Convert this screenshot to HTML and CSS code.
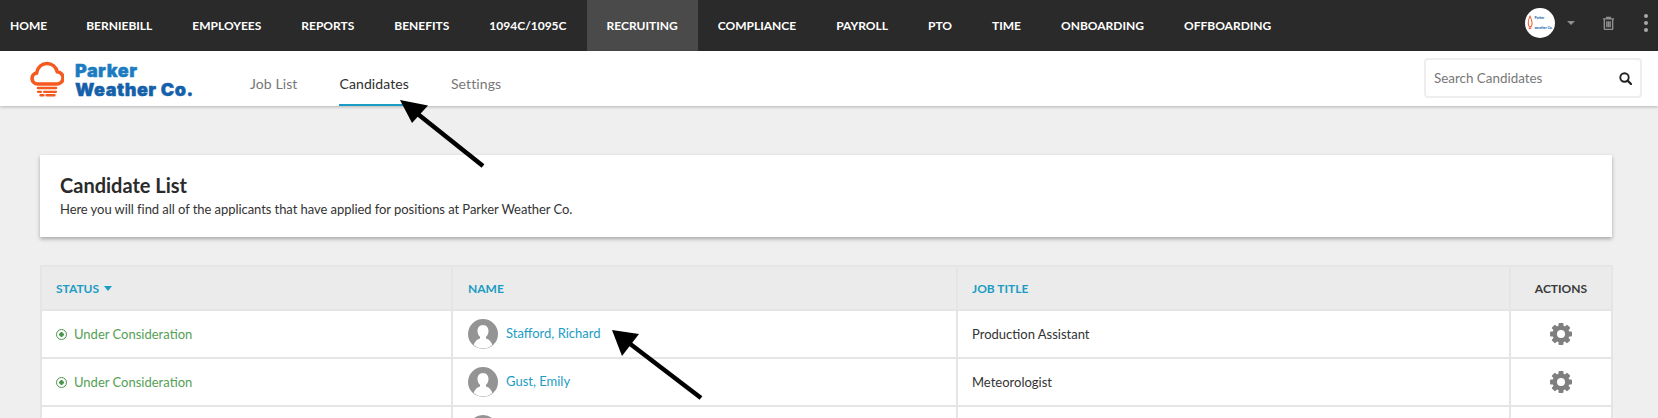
FILE: index.html
```html
<!DOCTYPE html>
<html lang="en">
<head>
<meta charset="utf-8">
<title>Candidate List</title>
<link rel="stylesheet" href="styles.css">
</head>
<body>
<div class="page">
  <nav class="topbar">
    <ul class="topnav">
      <li class="topnav-item first">HOME</li>
      <li class="topnav-item">BERNIEBILL</li>
      <li class="topnav-item">EMPLOYEES</li>
      <li class="topnav-item">REPORTS</li>
      <li class="topnav-item">BENEFITS</li>
      <li class="topnav-item">1094C/1095C</li>
      <li class="topnav-item active">RECRUITING</li>
      <li class="topnav-item">COMPLIANCE</li>
      <li class="topnav-item">PAYROLL</li>
      <li class="topnav-item">PTO</li>
      <li class="topnav-item">TIME</li>
      <li class="topnav-item">ONBOARDING</li>
      <li class="topnav-item">OFFBOARDING</li>
    </ul>
    <div class="topbar-right">
      <div class="company-badge">
        <svg class="badge-flame" width="6" height="18" viewBox="0 0 7 18"><path d="M3.500 1C1.500 5 1 9 2 12c.5 1.500 3 1.500 3.500 0C6.500 9 5.500 5 3.500 1z" fill="none" stroke="#f0562a" stroke-width="1.200"/><path d="M2 15h3" stroke="#f0562a" stroke-width="1.800"/></svg>
        <div class="badge-text"><span>Parker</span><span>weather Co.</span></div>
      </div>
      <span class="caret-down"></span>
      <svg class="trash" width="13" height="14" viewBox="0 0 14 15"><path d="M1 3h12M5 3V1.500h4V3M2.500 3v10.500a1 1 0 0 0 1 1h7a1 1 0 0 0 1-1V3M5.200 5.500v6.500M7 5.500v6.500M8.800 5.500v6.500" fill="none" stroke="#8f8f8f" stroke-width="1.500"/></svg>
      <div class="kebab"><i></i><i></i><i></i></div>
    </div>
  </nav>

  <header class="subbar">
    <div class="logo">
      <svg width="34" height="36" viewBox="0 0 34 36">
        <path d="M9 23H7.500a5.500 5.500 0 0 1-1-10.900C7.500 6 12 2.500 17 2.500c5 0 9 3.500 10.300 8.300a6 6 0 0 1-.8 12.200H9z" fill="none" stroke="#f4591f" stroke-width="3.600"/>
        <path d="M8 27h18" stroke="#f4591f" stroke-width="2.600" stroke-linecap="round"/>
        <path d="M8 30.800h3M14 30.800h12" stroke="#f4591f" stroke-width="2.200" stroke-linecap="round"/>
        <path d="M10.500 34.300h3M16.500 34.300h8" stroke="#f4591f" stroke-width="2.400" stroke-linecap="round"/>
      </svg>
      <div class="logo-text"><span class="logo-top">Parker</span><span class="logo-bottom">Weather Co.</span></div>
    </div>
    <ul class="tabs">
      <li class="tab">Job List</li>
      <li class="tab current">Candidates</li>
      <li class="tab">Settings</li>
    </ul>
    <div class="search">
      <span class="search-label">Search Candidates</span>
      <svg width="13" height="13" viewBox="0 0 13 13"><circle cx="5.500" cy="5.500" r="4.200" fill="none" stroke="#222" stroke-width="1.900"/><path d="M8.600 8.600l3.400 3.400" stroke="#222" stroke-width="2.200" stroke-linecap="round"/></svg>
    </div>
  </header>

  <main class="content">
    <section class="intro-card">
      <h1 class="intro-title">Candidate List</h1>
      <p class="intro-text">Here you will find all of the applicants that have applied for positions at Parker Weather Co.</p>
    </section>

    <table class="grid">
      <colgroup><col class="c-status"><col class="c-name"><col class="c-job"><col class="c-actions"></colgroup>
      <thead>
        <tr>
          <th class="first-col">STATUS <span class="sort-caret"></span></th>
          <th class="name-col">NAME</th>
          <th class="job-col">JOB TITLE</th>
          <th class="actions-head">ACTIONS</th>
        </tr>
      </thead>
      <tbody>
        <tr>
          <td class="status first-col"><span class="dot-circle"></span>Under Consideration</td>
          <td class="name-col"><div class="person"><svg class="avatar" viewBox="0 0 30 30"><use href="#avatar"/></svg><a class="name name-up">Stafford, Richard</a></div></td>
          <td class="job-col">Production Assistant</td>
          <td class="action"><svg class="gear" viewBox="0 0 24 24"><use href="#gear"/></svg></td>
        </tr>
        <tr>
          <td class="status first-col"><span class="dot-circle"></span>Under Consideration</td>
          <td class="name-col"><div class="person"><svg class="avatar" viewBox="0 0 30 30"><use href="#avatar"/></svg><a class="name name-up">Gust, Emily</a></div></td>
          <td class="job-col">Meteorologist</td>
          <td class="action"><svg class="gear" viewBox="0 0 24 24"><use href="#gear"/></svg></td>
        </tr>
        <tr>
          <td></td>
          <td class="name-col"><div class="person"><svg class="avatar" viewBox="0 0 30 30"><use href="#avatar"/></svg></div></td>
          <td></td>
          <td></td>
        </tr>
      </tbody>
    </table>
  </main>

  <svg class="arrows" width="1658" height="418" viewBox="0 0 1658 418">
    <path d="M483 166L414 111" stroke="#000" stroke-width="4.500"/>
    <path d="M400 100L428 105.500L412 123z" fill="#000"/>
    <path d="M701 398L629 343" stroke="#000" stroke-width="4.500"/>
    <path d="M612 330L639 334L622 356z" fill="#000"/>
  </svg>

  <svg class="defs" width="0" height="0">
    <defs>
      <g id="avatar">
        <circle cx="15" cy="15" r="15" fill="#949494"/>
        <clipPath id="avatar-clip"><circle cx="15" cy="15" r="14.500"/></clipPath>
        <g clip-path="url(#avatar-clip)">
          <path d="M15 6c-3.500 0-5.500 2.800-5.500 6 0 2.500 1 4.500 2.500 5.700v1.800C8 21 5.500 23.500 5 30h20c-.5-6.500-3-9-7-10.500v-1.800c1.500-1.200 2.500-3.200 2.500-5.700 0-3.200-2-6-5.500-6z" fill="#fff"/>
        </g>
      </g>
      <g id="gear" fill="#7f7f7f">
        <circle cx="12" cy="12" r="8.500"/>
        <rect x="9.500" y="1" width="5" height="22" rx="1"/>
        <rect x="9.500" y="1" width="5" height="22" rx="1" transform="rotate(45 12 12)"/>
        <rect x="9.500" y="1" width="5" height="22" rx="1" transform="rotate(90 12 12)"/>
        <rect x="9.500" y="1" width="5" height="22" rx="1" transform="rotate(135 12 12)"/>
        <circle cx="12" cy="12" r="4" fill="#fff"/>
      </g>
    </defs>
  </svg>
</div>
</body>
</html>
```

FILE: styles.css
```css
* { box-sizing: border-box; }
html, body { margin: 0; padding: 0; }
body { font-family: Lato, "Liberation Sans", sans-serif; background: #efefef; color: #2b2b2b; }
ul { list-style: none; margin: 0; padding: 0; }
.page { position: relative; width: 1658px; height: 418px; overflow: hidden; background: #efefef; }

.topbar { display: flex; justify-content: space-between; height: 51px; background: #2a2a2a; }
.topnav { display: flex; }
.topnav-item { display: flex; align-items: center; padding: 0 20px; color: #fff; font-size: 12px; font-weight: 700; }
.topnav-item.first { padding: 0 19px 0 10px; }
.topnav-item.active { background: #4a4a4a; }
.topbar-right { display: flex; align-items: center; padding-bottom: 5px; }
.company-badge { display: flex; align-items: center; justify-content: center; gap: 1px; width: 30px; height: 30px; border-radius: 50%; background: #fff; }
.badge-text { display: flex; flex-direction: column; color: #1a67b0; font-size: 3.400px; font-weight: 900; line-height: 10px; white-space: nowrap; }
.caret-down { width: 0; height: 0; margin-left: 12px; border-left: 4px solid transparent; border-right: 4px solid transparent; border-top: 4px solid #8f8f8f; }
.trash { margin-left: 27px; }
.kebab { display: flex; flex-direction: column; gap: 3px; margin: 0 10px 0 29px; }
.kebab i { display: block; width: 4px; height: 4px; border-radius: 50%; background: #a8a8a8; }

.subbar { display: flex; align-items: stretch; height: 55px; background: #fff; box-shadow: 0 1px 3px rgba(0,0,0,.25); position: relative; }
.logo { display: flex; align-items: center; gap: 11px; width: 250px; padding-left: 30px; }
.logo-text { display: flex; flex-direction: column; padding-top: 3px; font-family: Inter, Lato, sans-serif; font-weight: 900; font-size: 18px; line-height: 19px; letter-spacing: .5px; white-space: nowrap; -webkit-text-stroke: .4px currentColor; }
.logo-top { color: #1b7cc2; }
.logo-bottom { color: #1561a9; }
.tabs { display: flex; gap: 42px; }
.tab { display: flex; align-items: center; height: 55px; padding-top: 9px; color: #777; font-size: 14px; letter-spacing: .1px; }
.tab.current { color: #2e2e2e; box-shadow: inset 0 -2px 0 #1b9cc4; }
.search { display: flex; align-items: center; justify-content: space-between; width: 218px; height: 40px; margin: 7px 16px 0 auto; padding: 0 8px; border: 2px solid #eeeeee; border-radius: 4px; background: #fff; }
.search-label { color: #777; font-size: 13.400px; }

.content { padding: 49px 46px 0 40px; }
.intro-card { height: 82px; padding: 18px 20px 0; background: #fff; box-shadow: 0 2px 4px rgba(0,0,0,.3); }
.intro-title { margin: 0; font-size: 20px; line-height: 24px; font-weight: 700; color: #2b2b2b; }
.intro-text { margin: 3px 0 0; font-size: 13px; line-height: 18px; letter-spacing: -.06px; color: #333; }

.grid { width: 1571px; margin-top: 28px; border-collapse: collapse; table-layout: fixed; }
.c-status { width: 411px; }
.c-name { width: 505px; }
.c-job { width: 553px; }
.c-actions { width: 102px; }
.grid th, .grid td { border: 2px solid #e5e5e5; padding: 0 15px; }
.grid th { height: 44px; background: #ebebeb; color: #1b9cc4; font-size: 12px; font-weight: 700; text-align: left; }
.grid td { height: 48px; background: #fff; font-size: 13px; color: #333; }
.grid th.first-col, .grid td.first-col { padding-left: 14px; }
.grid th.name-col, .grid td.name-col { padding-left: 15px; }
.grid th.job-col, .grid td.job-col { padding-left: 14px; }
.grid th.actions-head { color: #3a3a3a; text-align: center; padding: 0; }
.sort-caret { display: inline-block; width: 0; height: 0; margin-left: 2px; vertical-align: 2px; border-left: 4px solid transparent; border-right: 4px solid transparent; border-top: 5px solid #1b9cc4; }
.grid td.status { color: #559e55; }
.dot-circle { display: inline-block; width: 11px; height: 11px; margin-right: 7px; vertical-align: -1px; border: 1.500px solid #4c954c; border-radius: 50%; background: radial-gradient(circle, #4c954c 0 2px, #fff 2.500px); }
.person { display: flex; align-items: center; gap: 8px; }
.avatar { display: block; width: 30px; height: 30px; flex: none; }
.name { color: #1b9cc4; }
.name-up { margin-top: -2px; }
.grid td.action { padding: 0; text-align: center; }
.gear { display: block; width: 24px; height: 24px; margin: 0 auto; }

.arrows { position: absolute; left: 0; top: 0; pointer-events: none; }
.defs { position: absolute; }
```
